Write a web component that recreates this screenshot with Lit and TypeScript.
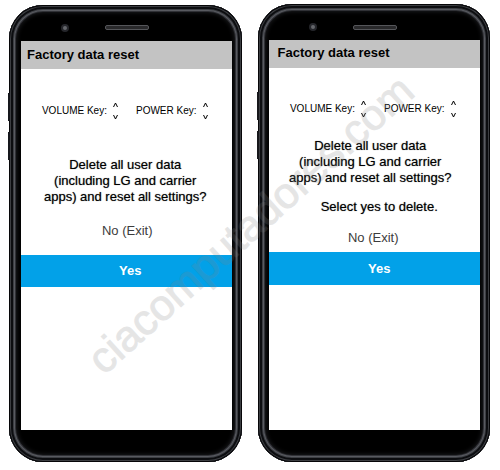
import { LitElement, html, css, nothing } from "lit";
import { customElement, property } from "lit/decorators.js";

@customElement("hardware-key")
class HardwareKey extends LitElement {
  @property() name = "";

  static styles = css`
    :host {
      display: flex;
      align-items: center;
      gap: 5px;
      font-size: 10px;
      line-height: 20px;
      white-space: nowrap;
    }
    .arrows {
      display: block;
      width: 7px;
      height: 18px;
      fill: none;
      stroke: currentColor;
    }
  `;

  render() {
    return html`
      <span>${this.name} Key:</span>
      <svg class="arrows" viewBox="0 0 7 18" aria-hidden="true">
        <path d="M1.5 5 L3.5 1 L5.5 5 M1.5 13 L3.5 17 L5.5 13" />
      </svg>
    `;
  }
}

@customElement("phone-mockup")
class PhoneMockup extends LitElement {
  @property() note = "";

  static styles = css`
    :host {
      display: block;
      min-width: 0;
    }
    .phone {
      position: relative;
      box-sizing: border-box;
      display: flex;
      flex-direction: column;
      min-height: 457px;
      padding: 0 10px 0 12px;
      border-radius: 34px;
      background: #000;
      box-shadow:
        inset 0 0 0 1px #060608,
        inset 0 0 0 2px #3c3e42,
        inset 0 0 0 4px #0c0d10,
        inset 0 0 0 5px #3c3e43,
        inset 0 0 0 6px #585a60,
        inset 0 0 0 7px #303136,
        inset 0 0 5px 7px #232428;
    }
    .side {
      position: absolute;
      left: -1px;
      width: 2px;
      height: 28px;
      background: #17181c;
    }
    .side.up {
      top: 88px;
    }
    .side.down {
      top: 127px;
    }
    .top {
      display: flex;
      align-items: center;
      height: 36px;
      box-sizing: border-box;
      padding: 10px 0 0 40px;
      gap: 36px;
    }
    .camera {
      box-sizing: border-box;
      width: 8px;
      height: 8px;
      border-radius: 50%;
      border: 2px solid #25262b;
      background: #65676c;
    }
    .speaker {
      box-sizing: border-box;
      width: 44px;
      height: 5px;
      border: 1px solid #55565a;
      border-radius: 2px;
      background: #29292b;
    }
    .screen {
      flex: 1;
      display: flex;
      flex-direction: column;
      align-items: stretch;
      background: #fff;
    }
    h1 {
      margin: 0;
      padding: 0 6px;
      background: #c3c3c3;
      font-size: 13px;
      line-height: 28px;
    }
    .keys {
      display: flex;
      justify-content: center;
      gap: 17px;
      margin: 32px 0 36px;
      padding-right: 2px;
    }
    p {
      margin: 0 0 18px;
      padding-right: 2px;
      text-align: center;
      text-shadow: 0 0 1px #777;
    }
    button {
      border: 0;
      padding: 0;
      background: none;
      font: inherit;
    }
    .no {
      color: #3c3c3c;
      margin-bottom: 16px;
      padding-left: 2px;
    }
    .yes {
      height: 32px;
      padding-left: 8px;
      background: #02a1e8;
      color: #fff;
      font-weight: 700;
    }
    .bottom {
      height: 32px;
    }
    .tall {
      min-height: 458px;
      padding-left: 11px;
    }
    .tall h1 {
      padding: 0 9px;
      line-height: 25px;
      padding-bottom: 3px;
    }
    .tall .keys {
      margin: 31px 0 19px;
    }
    .tall p {
      margin-bottom: 13px;
      padding-right: 8px;
    }
    .tall .note {
      margin-bottom: 15px;
      padding: 0 0 0 10px;
    }
    .tall .no {
      margin-bottom: 6px;
      padding: 0 2px 0 0;
    }
    .tall .yes {
      height: 33px;
      padding-left: 10px;
    }
  `;

  render() {
    return html`
      <section class="phone ${this.note ? "tall" : ""}">
        <span class="side up"></span>
        <span class="side down"></span>
        <div class="top">
          <span class="camera"></span>
          <span class="speaker"></span>
        </div>
        <div class="screen">
          <h1>Factory data reset</h1>
          <div class="keys">
            <hardware-key name="VOLUME"></hardware-key>
            <hardware-key name="POWER"></hardware-key>
          </div>
          <p>
            Delete all user data<br />(including LG and carrier<br />apps) and
            reset all settings?
          </p>
          ${this.note ? html`<p class="note">${this.note}</p>` : nothing}
          <button class="no" type="button">No (Exit)</button>
          <button class="yes" type="button">Yes</button>
        </div>
        <div class="bottom"></div>
      </section>
    `;
  }
}

@customElement("app-root")
class AppRoot extends LitElement {
  static styles = css`
    :host {
      position: relative;
      display: block;
      background: #fff;
      color: #000;
      font: 13px/16px "Liberation Sans", Arial, sans-serif;
      overflow: hidden;
    }
    .phones {
      display: grid;
      grid-template-columns: 1fr 1fr;
      gap: 16px;
      align-items: center;
      padding: 4px 10px 8px 9px;
    }
    .watermark {
      position: absolute;
      inset: 0 0 22px;
      display: grid;
      place-items: center;
      pointer-events: none;
      opacity: 0.2;
      color: #828282;
      -webkit-text-stroke: 1px #828282;
      font-size: 43px;
      line-height: 48px;
      white-space: nowrap;
    }
    .watermark span {
      transform: rotate(-42deg);
    }
  `;

  render() {
    return html`
      <main class="phones">
        <phone-mockup></phone-mockup>
        <phone-mockup note="Select yes to delete."></phone-mockup>
      </main>
      <div class="watermark"><span>ciacomputadores.com</span></div>
    `;
  }
}
